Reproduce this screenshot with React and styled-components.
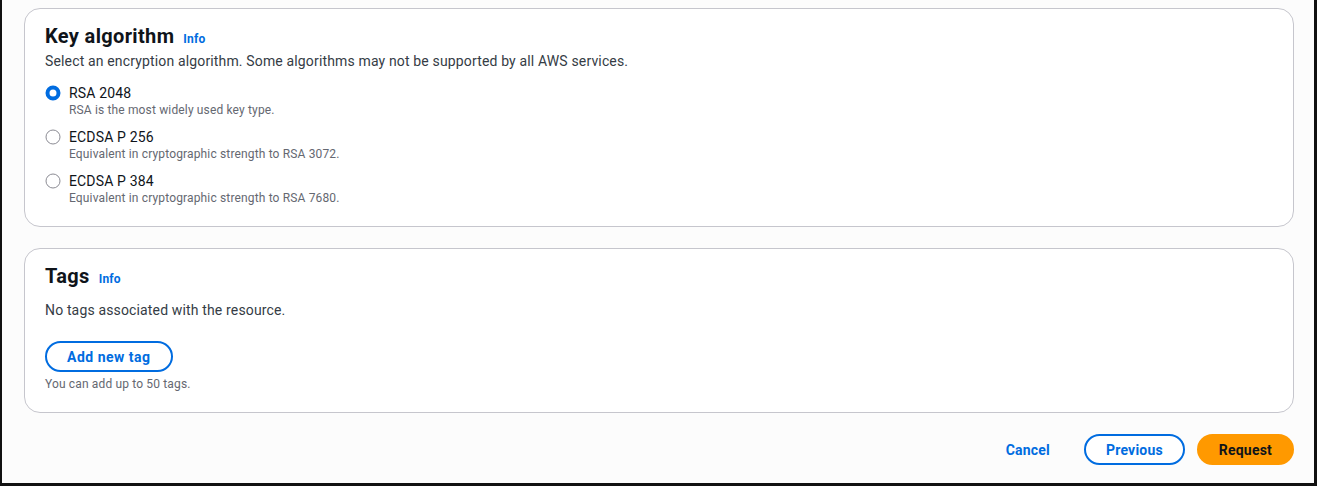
import styled, { createGlobalStyle } from 'styled-components';

const GlobalStyle = createGlobalStyle`
  html, body {
    margin: 0;
    padding: 0;
    background: #fcfcfc;
  }
  * {
    box-sizing: border-box;
  }
`;

const Frame = styled.div`
  height: 486px;
  display: flex;
  flex-direction: column;
  gap: 21px;
  padding: 8px 20px 0 22px;
  border-left: 2px solid #111;
  border-right: 3px solid #111;
  border-bottom: 3px solid #111;
  background: #fcfcfc;
  font-family: Roboto, 'Liberation Sans', Arial, sans-serif;
  color: #0f141a;
`;

const Card = styled.section`
  background: #ffffff;
  border: 1px solid #c6c6cd;
  border-radius: 16px;
  padding: 15px 20px 20px;
`;

const Header = styled.div`
  display: flex;
  align-items: baseline;
  gap: 9px;
  height: 24px;
`;

const Title = styled.h2`
  margin: 0;
  font-size: 20px;
  line-height: 24px;
  font-weight: 700;
  letter-spacing: 0.35px;
`;

const InfoLink = styled.a`
  font-size: 12px;
  font-weight: 700;
  letter-spacing: 0.2px;
  color: #006ce0;
  text-decoration: none;
`;

const Text = styled.p`
  margin: ${p => p.$top || 0}px 0 0;
  font-size: 14px;
  line-height: 20px;
  letter-spacing: 0.15px;
  color: #353c45;
`;

const Hint = styled.p`
  margin: ${p => p.$top || 0}px 0 0;
  font-size: 12px;
  line-height: 16px;
  letter-spacing: 0.15px;
  color: #656871;
`;

const RadioGroup = styled.div`
  margin-top: 13px;
  display: flex;
  flex-direction: column;
  gap: 10px;
`;

const Option = styled.label`
  display: grid;
  grid-template-columns: 16px 1fr;
  column-gap: 8px;
  cursor: pointer;
`;

const RadioMark = styled.span`
  display: flex;
  align-items: center;
  height: 18px;
`;

const OptionLabel = styled.span`
  font-size: 14px;
  line-height: 18px;
  letter-spacing: 0.15px;
`;

const OptionHint = styled.span`
  grid-column: 2;
  font-size: 12px;
  line-height: 16px;
  letter-spacing: 0.15px;
  color: #656871;
`;

const Button = styled.button`
  height: 31px;
  padding: 0 20px;
  border-radius: 20px;
  border: 2px solid ${p => (p.$primary ? '#ff9900' : p.$link ? 'transparent' : '#006ce0')};
  background: ${p => (p.$primary ? '#ff9900' : p.$link ? 'transparent' : '#ffffff')};
  color: ${p => (p.$primary ? '#0f141a' : '#006ce0')};
  font-family: inherit;
  font-size: 14px;
  font-weight: 700;
  line-height: 20px;
  letter-spacing: 0.2px;
  cursor: pointer;
`;

const TagButton = styled(Button)`
  margin-top: 21px;
  letter-spacing: 0.5px;
`;

const Footer = styled.div`
  display: flex;
  justify-content: flex-end;
  align-items: center;
  gap: 12px;
`;

const Radio = ({ checked }) => (
  <svg width="16" height="16" viewBox="0 0 16 16" fill="none">
    {checked ? (
      <circle cx="8" cy="8" r="5.5" fill="#fff" stroke="#006ce0" strokeWidth="4" />
    ) : (
      <circle cx="8" cy="8" r="7" fill="#fff" stroke="#8c8c94" strokeWidth="1" />
    )}
  </svg>
);

const algorithms = [
  { name: 'RSA 2048', hint: 'RSA is the most widely used key type.', checked: true },
  { name: 'ECDSA P 256', hint: 'Equivalent in cryptographic strength to RSA 3072.' },
  { name: 'ECDSA P 384', hint: 'Equivalent in cryptographic strength to RSA 7680.' },
];

export default function App() {
  return (
    <>
      <GlobalStyle />
      <Frame>
        <Card>
          <Header>
            <Title>Key algorithm</Title>
            <InfoLink href="#">Info</InfoLink>
          </Header>
          <Text $top={3}>
            Select an encryption algorithm. Some algorithms may not be supported by all AWS services.
          </Text>
          <RadioGroup>
            {algorithms.map(a => (
              <Option key={a.name}>
                <RadioMark>
                  <Radio checked={a.checked} />
                </RadioMark>
                <OptionLabel>{a.name}</OptionLabel>
                <OptionHint>{a.hint}</OptionHint>
              </Option>
            ))}
          </RadioGroup>
        </Card>

        <Card>
          <Header>
            <Title>Tags</Title>
            <InfoLink href="#">Info</InfoLink>
          </Header>
          <Text $top={12}>No tags associated with the resource.</Text>
          <TagButton>Add new tag</TagButton>
          <Hint $top={4}>You can add up to 50 tags.</Hint>
        </Card>

        <Footer>
          <Button $link>Cancel</Button>
          <Button>Previous</Button>
          <Button $primary>Request</Button>
        </Footer>
      </Frame>
    </>
  );
}
